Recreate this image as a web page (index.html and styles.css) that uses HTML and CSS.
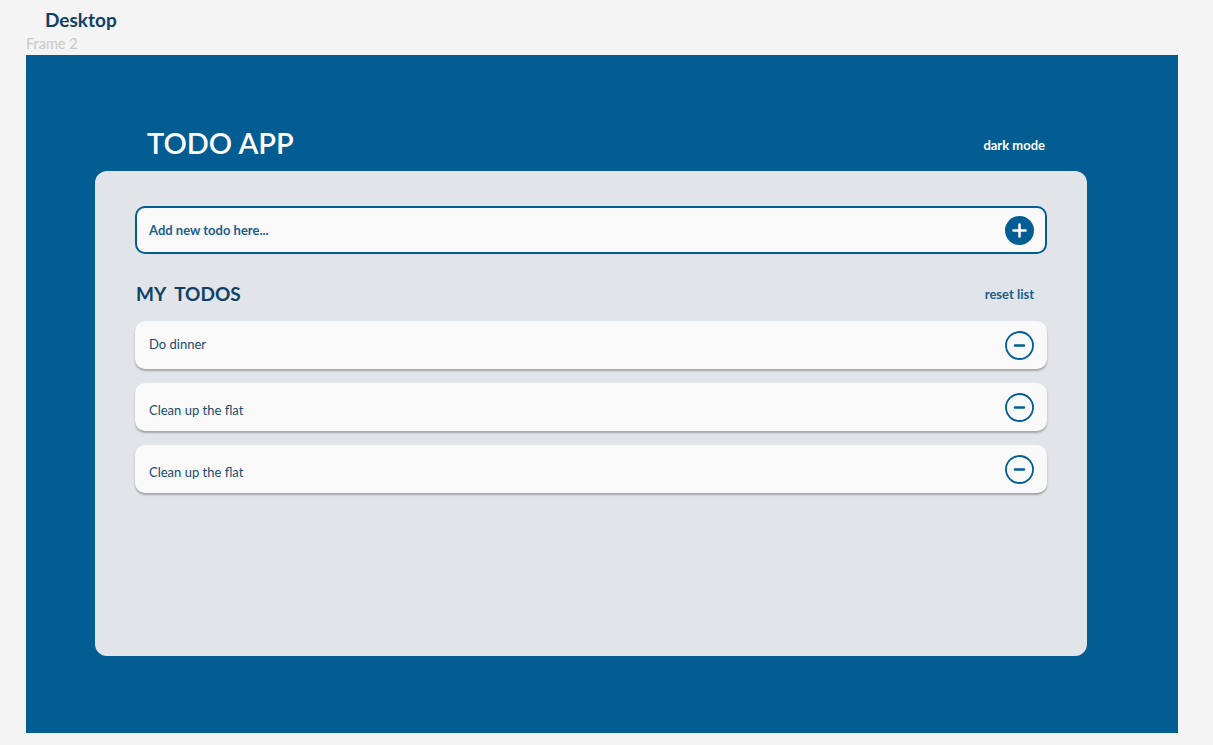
FILE: index.html
```html
<!DOCTYPE html>
<html lang="en">
<head>
<meta charset="utf-8">
<title>Todo App</title>
<link rel="stylesheet" href="styles.css">
</head>
<body>
  <div class="canvas">
    <div class="canvas-title">Desktop</div>
    <div class="frame-label">Frame 2</div>
    <main class="frame">
      <header class="app-header">
        <h1 class="app-title">TODO APP</h1>
        <span class="mode-toggle">dark mode</span>
      </header>
      <section class="card">
        <div class="add-box">
          <span class="add-placeholder">Add new todo here...</span>
          <svg class="icon" width="29" height="29" viewBox="0 0 29 29" aria-hidden="true">
            <circle cx="14.5" cy="14.5" r="14.5" fill="#035c92"/>
            <path d="M14.5 8.5v12M8.5 14.5h12" stroke="#fff" stroke-width="2.6" stroke-linecap="round"/>
          </svg>
        </div>
        <div class="list-head">
          <h2 class="list-title">MY&nbsp; TODOS</h2>
          <span class="reset">reset list</span>
        </div>
        <ul class="todos">
          <li class="todo todo-first">
            <span class="todo-text">Do dinner</span>
            <svg class="icon" width="29" height="29" viewBox="0 0 29 29" aria-hidden="true">
              <circle cx="14.5" cy="14.5" r="13.5" fill="none" stroke="#035c92" stroke-width="1.8"/>
              <path d="M10 14.5h9" stroke="#035c92" stroke-width="2.4" stroke-linecap="round"/>
            </svg>
          </li>
          <li class="todo">
            <span class="todo-text">Clean up the flat</span>
            <svg class="icon" width="29" height="29" viewBox="0 0 29 29" aria-hidden="true">
              <circle cx="14.5" cy="14.5" r="13.5" fill="none" stroke="#035c92" stroke-width="1.8"/>
              <path d="M10 14.5h9" stroke="#035c92" stroke-width="2.4" stroke-linecap="round"/>
            </svg>
          </li>
          <li class="todo">
            <span class="todo-text">Clean up the flat</span>
            <svg class="icon" width="29" height="29" viewBox="0 0 29 29" aria-hidden="true">
              <circle cx="14.5" cy="14.5" r="13.5" fill="none" stroke="#035c92" stroke-width="1.8"/>
              <path d="M10 14.5h9" stroke="#035c92" stroke-width="2.4" stroke-linecap="round"/>
            </svg>
          </li>
        </ul>
      </section>
    </main>
  </div>
</body>
</html>
```

FILE: styles.css
```css
* { box-sizing: border-box; }

html, body {
  margin: 0;
  padding: 0;
  background: #f4f4f4;
  font-family: Lato, "Open Sans", "Liberation Sans", sans-serif;
}

.canvas {
  display: flex;
  flex-direction: column;
  padding: 8px 0 12px 26px;
}

.canvas-title {
  margin-left: 19px;
  font-size: 19px;
  font-weight: 700;
  color: #0f4068;
  line-height: 23px;
}

.frame-label {
  margin-top: 4px;
  font-size: 14.5px;
  color: #c8c8c8;
  line-height: 17px;
}

.frame {
  margin-top: 3px;
  width: 1152px;
  height: 678px;
  background: #035c92;
  padding: 70px 0 0 69px;
  display: flex;
  flex-direction: column;
}

.app-header {
  width: 992px;
  height: 36px;
  margin-bottom: 10px;
  padding: 0 42px 0 52px;
  display: flex;
  align-items: center;
  justify-content: space-between;
}

.app-title {
  margin: 0;
  font-size: 29px;
  font-weight: 600;
  color: #ffffff;
  line-height: 36px;
}

.mode-toggle {
  margin-top: 4px;
  font-size: 13px;
  font-weight: 700;
  color: #ffffff;
}

.card {
  width: 992px;
  height: 485px;
  background: #e1e4e9;
  border-radius: 12px;
  padding: 35px 40px;
}

.add-box {
  height: 48px;
  border: 2px solid #035c92;
  border-radius: 10px;
  background: #f9f9f9;
  display: flex;
  align-items: center;
  justify-content: space-between;
  padding: 0 11px 0 12px;
}

.add-placeholder {
  font-size: 13px;
  font-weight: 700;
  color: #1a5e8e;
}

.icon { display: block; flex: none; }

.list-head {
  height: 40px;
  margin: 19px 0 8px;
  padding: 0 13px 0 1px;
  display: flex;
  align-items: center;
  justify-content: space-between;
}

.list-title {
  margin: 0;
  font-size: 19px;
  font-weight: 700;
  color: #0f4068;
}

.reset {
  margin-top: 2px;
  font-size: 13px;
  font-weight: 700;
  color: #1a5e8e;
}

.todos {
  list-style: none;
  margin: 0;
  padding: 0;
  display: flex;
  flex-direction: column;
  gap: 14px;
}

.todo {
  height: 48px;
  background: #f9f9f9;
  border-radius: 10px;
  box-shadow: 0 2px 2px rgba(0, 0, 0, 0.28);
  display: flex;
  align-items: center;
  justify-content: space-between;
  padding: 0 13px 0 14px;
}

.todo-text {
  margin-top: 6px;
  font-size: 13px;
  color: #1c4a70;
}

.todo-first .todo-text { margin-top: -2px; }
```
